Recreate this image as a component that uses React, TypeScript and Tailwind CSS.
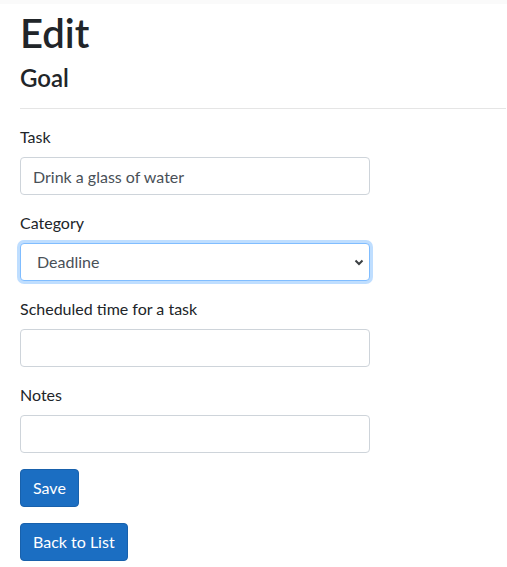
import React from 'react';

const FONT = "font-['Segoe_UI','Lato','Noto_Sans',sans-serif]";

const Field: React.FC<{ label: string; children: React.ReactNode }> = ({ label, children }) => (
  <div className="mb-4">
    <label className="block mb-2 text-base leading-6">{label}</label>
    {children}
  </div>
);

const inputCls =
  'block w-full h-[38px] px-3 text-base leading-6 text-[#495057] bg-white border border-[#ced4da] rounded-[4px] outline-none';

const App: React.FC = () => {
  return (
    <div className={`${FONT} min-h-screen bg-white text-[#212529]`}>
      <div className="h-[4px] bg-[#fafafa]" />
      <div className="pl-5 pr-[1px] pt-[3px]">
        <h1 className="text-[40px] leading-[48px] font-semibold pt-[2px] mb-[6px]">Edit</h1>
        <h4 className="text-[24px] leading-[29px] font-semibold mb-2">Goal</h4>
        <hr className="mt-4 mb-4 border-t border-[#e5e5e5]" />
        <div className="w-[350px]">
          <Field label="Task">
            <input className={inputCls} defaultValue="Drink a glass of water" />
          </Field>
          <Field label="Category">
            <div className="relative h-[38px] bg-white border border-[#80bdff] rounded-[4px] shadow-[0_0_0_3px_rgba(0,123,255,0.25)] flex items-center pl-4 text-[#495057]">
              <span className="text-base leading-6">Deadline</span>
              <svg
                className="absolute right-[4px] top-1/2 -translate-y-1/2"
                width="12"
                height="12"
                viewBox="0 0 12 12"
              >
                <path d="M2.5 4.5 L6 8 L9.5 4.5" fill="none" stroke="#3c4043" strokeWidth="2" />
              </svg>
            </div>
          </Field>
          <Field label="Scheduled time for a task">
            <input className={inputCls} />
          </Field>
          <Field label="Notes">
            <input className={inputCls} />
          </Field>
          <div className="mb-4">
            <button className="h-[38px] px-3 text-base leading-6 text-white bg-[#1b6ec2] border border-[#1861ac] rounded-[4px]">
              Save
            </button>
          </div>
          <div>
            <button className="h-[38px] px-3 text-base leading-6 text-white bg-[#1b6ec2] border border-[#1861ac] rounded-[4px]">
              Back to List
            </button>
          </div>
        </div>
      </div>
    </div>
  );
};

export default App;
